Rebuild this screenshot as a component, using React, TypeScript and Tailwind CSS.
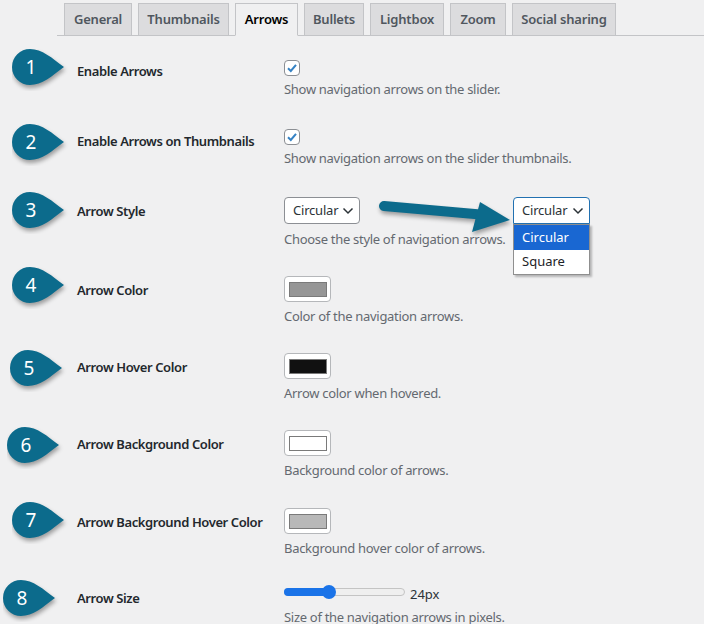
import React from "react";

type Row = {
  n: number;
  label: string;
  desc: string;
  kind: "check" | "select" | "color" | "range";
  color?: string;
  rowH: string;
  badge: string;
  labelPad: string;
  descGap: string;
};

const tabs = [
  { name: "General", w: "w-[68px]" },
  { name: "Thumbnails", w: "w-[91px]" },
  { name: "Arrows", w: "w-[63px]", active: true },
  { name: "Bullets", w: "w-[60px]" },
  { name: "Lightbox", w: "w-[74px]" },
  { name: "Zoom", w: "w-[56px]" },
  { name: "Social sharing", w: "w-[104px]" },
];

const rows: Row[] = [
  { n: 1, label: "Enable Arrows", desc: "Show navigation arrows on the slider.", kind: "check", rowH: "h-[69px]", badge: "-mt-[11px] ml-[12px]", labelPad: "pt-[1px]", descGap: "mt-[4px]" },
  { n: 2, label: "Enable Arrows on Thumbnails", desc: "Show navigation arrows on the slider thumbnails.", kind: "check", rowH: "h-[68px]", badge: "-mt-[5px] ml-[12px]", labelPad: "pt-[2px]", descGap: "mt-[4px]" },
  { n: 3, label: "Arrow Style", desc: "Choose the style of navigation arrows.", kind: "select", rowH: "h-[79px]", badge: "-mt-[5px] ml-[12px]", labelPad: "pt-[4px]", descGap: "mt-[6px]" },
  { n: 4, label: "Arrow Color", desc: "Color of the navigation arrows.", kind: "color", color: "#969696", rowH: "h-[77px]", badge: "-mt-[9px] ml-[12px]", labelPad: "pt-[4px]", descGap: "mt-[5px]" },
  { n: 5, label: "Arrow Hover Color", desc: "Arrow color when hovered.", kind: "color", color: "#111111", rowH: "h-[77px]", badge: "-mt-[3px] ml-[10px]", labelPad: "pt-[4px]", descGap: "mt-[5px]" },
  { n: 6, label: "Arrow Background Color", desc: "Background color of arrows.", kind: "color", color: "#ffffff", rowH: "h-[78px]", badge: "-mt-[3px] ml-[7px]", labelPad: "pt-[4px]", descGap: "mt-[5px]" },
  { n: 7, label: "Arrow Background Hover Color", desc: "Background hover color of arrows.", kind: "color", color: "#b8b8b8", rowH: "h-[77px]", badge: "-mt-[6px] ml-[12px]", labelPad: "pt-[4px]", descGap: "mt-[5px]" },
  { n: 8, label: "Arrow Size", desc: "Size of the navigation arrows in pixels.", kind: "range", rowH: "h-[40px]", badge: "-mt-[5px] ml-[3px]", labelPad: "pt-[3px]", descGap: "mt-[9px]" },
];

function Badge({ n }: { n: number }) {
  return (
    <svg width="58" height="42" viewBox="0 0 58 42" className="block">
      <path
        d="M0 18 A18 18 0 0 1 18 0 C30 0 40 9 52 18 C40 27 30 36 18 36 A18 18 0 0 1 0 18 Z"
        fill="#0c6b8c"
        style={{ filter: "drop-shadow(1px 3px 2px rgba(0,0,0,0.35))" }}
      />
      <text x="19" y="25" textAnchor="middle" fill="#fff" fontSize="19" fontFamily="Noto Sans, sans-serif">
        {n}
      </text>
    </svg>
  );
}

function Chevron() {
  return (
    <svg width="12" height="8" viewBox="0 0 12 8" className="block shrink-0">
      <path d="M1.5 1.5 L6 6 L10.5 1.5" fill="none" stroke="#2c3338" strokeWidth="1.5" />
    </svg>
  );
}

function Checkbox() {
  return (
    <div className="w-4 h-4 rounded-[4px] border border-[#8c8f94] bg-white flex items-center justify-center">
      <svg width="12" height="12" viewBox="0 0 12 12">
        <path d="M2 6.3 L4.8 9 L10 2.8" fill="none" stroke="#3582c4" strokeWidth="2" />
      </svg>
    </div>
  );
}

function Swatch({ color }: { color: string }) {
  return (
    <div className="w-[47px] h-[26px] rounded-[4px] border border-[#b5b7ba] bg-white flex items-center justify-center">
      <div className="w-[38px] h-[15px] border border-[#7a7a7a]" style={{ background: color }} />
    </div>
  );
}

function Control({ row }: { row: Row }) {
  if (row.kind === "check") return <Checkbox />;
  if (row.kind === "color") return <Swatch color={row.color!} />;
  if (row.kind === "select")
    return (
      <div className="w-[76px] h-[27px] rounded-[4px] border border-[#8c8f94] bg-white flex items-center justify-between pl-[8px] pr-[5px] text-[13px] tracking-[-0.2px] text-[#2c3338]">
        <span>Circular</span>
        <Chevron />
      </div>
    );
  return (
    <div className="flex items-center h-[14px]">
      <div className="relative w-[121px] h-[8px] rounded-full border border-[#c4c4c4] bg-[#efefef]">
        <div className="absolute -left-px -top-px h-[8px] w-[46px] rounded-full bg-[#1a73e8]" />
        <div className="absolute left-[37px] -top-[4px] w-[14px] h-[14px] rounded-full bg-[#1a73e8]" />
      </div>
      <span className="ml-[5px] mt-[6px] text-[13px] text-[#2c3338]">24px</span>
    </div>
  );
}

function OpenSelect() {
  return (
    <div className="absolute left-[513px] top-0 w-[77px]">
      <div className="h-[27px] rounded-t-[4px] border border-[#2271b1] bg-white flex items-center justify-between pl-[8px] pr-[5px] text-[13px] tracking-[-0.2px] text-[#2c3338]">
        <span>Circular</span>
        <Chevron />
      </div>
      <div className="w-[77px] border border-[#8f8f8f] bg-white text-[13px] shadow-[2px_2px_2px_rgba(0,0,0,0.25)]">
        <div className="h-[25px] flex items-center pl-[8px] bg-[#1967d2] text-white">Circular</div>
        <div className="h-[24px] flex items-center pl-[8px] text-[#1d2327]">Square</div>
      </div>
    </div>
  );
}

function BigArrow() {
  return (
    <svg width="160" height="50" viewBox="0 0 160 50" className="absolute left-[368px] -top-[4px]">
      <g style={{ filter: "drop-shadow(1px 3px 2px rgba(0,0,0,0.35))" }}>
        <path d="M16 13 L118 22" stroke="#0c6b8c" strokeWidth="10" strokeLinecap="round" fill="none" />
        <path d="M112 9 L142 27 L104 39 Z" fill="#0c6b8c" />
      </g>
    </svg>
  );
}

export default function App() {
  return (
    <div className="w-[704px] h-[624px] overflow-hidden bg-[#f0f0f1] font-['Noto_Sans',sans-serif] text-[#1d2327]">
      <div className="ml-[57px] pt-[3px] flex items-end border-b border-[#c3c4c7]">
        {tabs.map((t) => (
          <div
            key={t.name}
            className={`${t.w} ml-[6px] first:ml-[7px] h-[33px] -mb-px flex items-center justify-center border border-[#c3c4c7] text-[13px] font-semibold tracking-[-0.2px] ${
              t.active ? "bg-[#f0f0f1] border-b-[#f0f0f1] text-[#000]" : "bg-[#dcdcde] text-[#50575e]"
            }`}
          >
            {t.name}
          </div>
        ))}
      </div>

      <div className="pt-[24px]">
        {rows.map((row) => (
          <div key={row.n} className={`relative flex ${row.rowH}`}>
            <div className="w-[77px] shrink-0">
              <div className={row.badge}>
                <Badge n={row.n} />
              </div>
            </div>
            <div className={`w-[207px] shrink-0 text-[13px] font-semibold leading-[20px] tracking-[-0.4px] text-[#23282d] ${row.labelPad}`}>
              {row.label}
            </div>
            <div className="flex flex-col items-start">
              <Control row={row} />
              <p className={`text-[13px] leading-[18px] text-[#646970] tracking-[-0.3px] ${row.descGap}`}>{row.desc}</p>
            </div>
            {row.kind === "select" && (
              <>
                <BigArrow />
                <OpenSelect />
              </>
            )}
          </div>
        ))}
      </div>
    </div>
  );
}
